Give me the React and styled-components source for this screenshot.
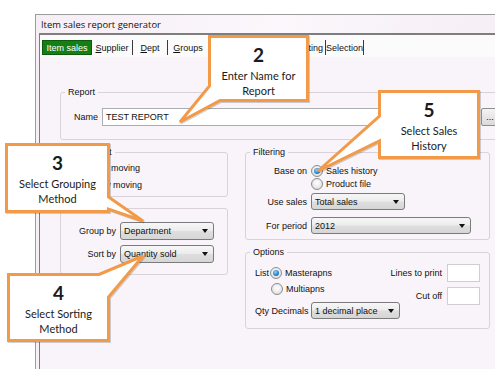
import React from "react";
import styled, { createGlobalStyle } from "styled-components";

const Global = createGlobalStyle`
  html, body { margin: 0; padding: 0; background: #ffffff; overflow: hidden; }
  body { font-family: "Liberation Sans", Arial, sans-serif; }
  * { box-sizing: border-box; }
`;

const Page = styled.div`
  position: relative;
  width: 495px;
  height: 369px;
  overflow: hidden;
  padding: 14px 0 0 35px;
  background: #ffffff;
`;

const Window = styled.div`
  width: 480px;
  height: 100%;
  border-top: 1px solid #9c9c9c;
  border-left: 1px solid #9c9c9c;
  background: linear-gradient(100deg, #f6eef5 0%, #fbf7fb 45%, #f4ecf3 100%);
  display: flex;
  flex-direction: column;
`;

const TitleBar = styled.div`
  height: 18px;
  padding-left: 5px;
  display: flex;
  align-items: center;
  font-family: "Open Sans", "Liberation Sans", sans-serif;
  font-size: 9.4px;
  color: #111;
`;

const Frame = styled.div`
  flex: 1;
  margin-left: 3px;
  border-top: 2px solid #7e7e7e;
  border-left: 1px solid #7e7e7e;
  background: #f9f4f9;
  display: flex;
  flex-direction: column;
`;

const TabBar = styled.div`
  height: 22px;
  padding: 5px 0 0 2px;
  display: flex;
  align-items: flex-start;
  background: #fcfbfc;
`;

const Tab = styled.div`
  width: ${(p) => p.$w}px;
  height: 15px;
  display: flex;
  align-items: center;
  justify-content: ${(p) => (p.$end ? "flex-end" : "center")};
  padding-right: ${(p) => (p.$end ? 2 : 0)}px;
  overflow: hidden;
  font-size: 9px;
  color: ${(p) => (p.$active ? "#ffffff" : "#111")};
  background: ${(p) => (p.$active ? "#157f15" : "transparent")};
  border: ${(p) => (p.$active ? "1px solid #0c5c0c" : "none")};
  border-right: ${(p) => (p.$active ? "1px solid #0c5c0c" : "1px solid #3a3a3a")};
  white-space: nowrap;
  u { text-decoration: underline; }
`;

const Content = styled.div`
  padding: 29px 0 0 20px;
`;

const Group = styled.fieldset`
  margin: 0;
  padding: 0;
  min-width: 0;
  width: ${(p) => (p.$w ? `${p.$w}px` : "auto")};
  height: ${(p) => p.$h}px;
  border: 1px solid #d9d3d9;
  border-radius: 3px;
`;

const Legend = styled.legend`
  margin-left: 4px;
  padding: 0 3px;
  font-size: 9px;
  line-height: 12px;
  color: #111;
`;

const ReportBody = styled.div`
  padding: 10px 0 0 13px;
  display: flex;
  align-items: center;
  gap: 4px;
`;

const Label = styled.span`
  font-size: 9px;
  color: #111;
  white-space: nowrap;
  text-align: ${(p) => (p.$right ? "right" : "left")};
`;

const TextInput = styled.div`
  width: ${(p) => p.$w}px;
  height: ${(p) => p.$h || 18}px;
  background: #ffffff;
  border: 1px solid ${(p) => (p.$light ? "#cfcfcf" : "#abadb3")};
  font-size: 9px;
  display: flex;
  align-items: center;
  padding-left: 3px;
  color: #111;
`;

const EllipsisButton = styled.div`
  width: 18px;
  height: 18px;
  margin-left: -3px;
  border: 1px solid #8d8d8d;
  border-radius: 2px;
  background: linear-gradient(#f4f4f4, #dadada);
  font-size: 9px;
  display: flex;
  align-items: center;
  justify-content: center;
`;

const Columns = styled.div`
  margin-top: 6px;
  display: grid;
  grid-template-columns: 168px 245px;
  column-gap: 17px;
`;

const Column = styled.div`
  display: flex;
  flex-direction: column;
  gap: ${(p) => p.$gap}px;
`;

const RadioStack = styled.div`
  padding: 3px 0 0 15px;
  display: flex;
  flex-direction: column;
  gap: 4px;
`;

const RadioRow = styled.div`
  height: ${(p) => p.$h || 13}px;
  display: flex;
  align-items: center;
  gap: ${(p) => (p.$gap != null ? p.$gap : 3)}px;
  padding-left: ${(p) => p.$indent || 0}px;
  font-size: 9px;
  color: #111;
  white-space: nowrap;
`;

const RadioDot = styled.span`
  width: 12px;
  height: 12px;
  flex: none;
  margin-right: ${(p) => p.$mr || 0}px;
  border-radius: 50%;
  border: 1px solid #8b8c8d;
  background: radial-gradient(circle at 50% 40%, #ffffff 0%, #eeeeee 45%, #d2d2d2 100%);
  display: flex;
  align-items: center;
  justify-content: center;
  &::after {
    content: "";
    width: 6px;
    height: 6px;
    border-radius: 50%;
    display: ${(p) => (p.$on ? "block" : "none")};
    background: radial-gradient(circle at 40% 35%, #8fd3fb 0%, #2a86cf 55%, #0f4f8c 100%);
  }
`;

const FormGrid = styled.div`
  padding: ${(p) => p.$pad || "8px 0 0 0"};
  display: grid;
  grid-template-columns: ${(p) => p.$label}px auto;
  column-gap: 4px;
  row-gap: ${(p) => p.$rowGap || 0}px;
  align-items: center;
  justify-items: start;
  & > ${Label} { justify-self: end; }
`;

const Combo = styled.div`
  width: ${(p) => p.$w}px;
  height: ${(p) => p.$h || 18}px;
  margin-top: ${(p) => p.$mt || 0}px;
  border: 1px solid #7b7b7b;
  border-radius: 3px;
  background: linear-gradient(#f7f7f7 0%, #ececec 48%, #dedede 52%, #d6d6d6 100%);
  display: flex;
  align-items: center;
  justify-content: space-between;
  padding: 0 5px 0 3px;
  font-size: 9px;
  color: #111;
  white-space: nowrap;
  &::after {
    content: "";
    width: 0;
    height: 0;
    border-left: 3.5px solid transparent;
    border-right: 3.5px solid transparent;
    border-top: 4px solid #111;
  }
`;

const Cell = styled.div`
  margin-top: ${(p) => p.$mt || 0}px;
`;

const OptionsBody = styled.div`
  padding: 6px 9px 0 9px;
`;

const OptionsTop = styled.div`
  display: flex;
  justify-content: space-between;
  align-items: flex-start;
`;

const ListCol = styled.div`
  display: flex;
  flex-direction: column;
`;

const SmallFields = styled.div`
  display: grid;
  grid-template-columns: auto 33px;
  column-gap: 5px;
  row-gap: 5px;
  align-items: center;
  justify-items: end;
`;

const QtyRow = styled.div`
  margin-top: -3px;
  display: grid;
  grid-template-columns: 52px auto;
  column-gap: 4px;
  align-items: center;
`;

/* ---------- callouts (overlay) ---------- */

const CalloutBox = styled.div`
  position: absolute;
  left: ${(p) => p.$x}px;
  top: ${(p) => p.$y}px;
  width: ${(p) => p.$w}px;
  height: ${(p) => p.$h}px;
  z-index: 5;
`;

const CalloutShape = styled.svg`
  position: absolute;
  left: 0;
  top: 0;
  overflow: visible;
  filter: drop-shadow(1px 1px 0.6px rgba(0, 0, 0, 0.18));
`;

const CalloutText = styled.div`
  position: relative;
  display: flex;
  flex-direction: column;
  align-items: center;
  padding-top: 9px;
  font-family: Lato, "Open Sans", sans-serif;
  color: #1b1b1b;
`;

const CalloutNum = styled.div`
  font-weight: 700;
  font-size: 19px;
  line-height: 22px;
`;

const CalloutLines = styled.div`
  margin-top: 3px;
  font-size: 11px;
  line-height: 14.5px;
  text-align: center;
  white-space: nowrap;
`;

function Callout({ x, y, w, h, d, num, lines }) {
  return (
    <CalloutBox $x={x} $y={y} $w={w} $h={h}>
      <CalloutShape width={w} height={h} viewBox={`0 0 ${w} ${h}`}>
        <path d={d} fill="#ffffff" stroke="#f29a48" strokeWidth="3" strokeLinejoin="miter" />
      </CalloutShape>
      <CalloutText>
        <CalloutNum>{num}</CalloutNum>
        <CalloutLines>
          {lines.map((l) => (
            <div key={l}>{l}</div>
          ))}
        </CalloutLines>
      </CalloutText>
    </CalloutBox>
  );
}

const Radio = ({ on, children, indent, h, gap }) => (
  <RadioRow $indent={indent} $h={h} $gap={gap}>
    <RadioDot $on={on} />
    {children}
  </RadioRow>
);

export default function App() {
  return (
    <>
      <Global />
      <Page>
        <Window>
          <TitleBar>Item sales report generator</TitleBar>
          <Frame>
            <TabBar>
              <Tab $w={50} $active>Item sales</Tab>
              <Tab $w={41}><span><u>S</u>upplier</span></Tab>
              <Tab $w={35}><span><u>D</u>ept</span></Tab>
              <Tab $w={41}><span><u>G</u>roups</span></Tab>
              <Tab $w={117} $end>Printing</Tab>
              <Tab $w={38}>Selection</Tab>
            </TabBar>
            <Content>
              <Group $w={440} $h={54}>
                <Legend>Report</Legend>
                <ReportBody>
                  <Label>Name</Label>
                  <TextInput $w={378}>TEST REPORT</TextInput>
                  <EllipsisButton>...</EllipsisButton>
                </ReportBody>
              </Group>
              <Columns>
                <Column $gap={5}>
                  <Group $h={51}>
                    <Legend>Item report</Legend>
                    <RadioStack>
                      <Radio on>Fast moving</Radio>
                      <Radio>Slow moving</Radio>
                    </RadioStack>
                  </Group>
                  <Group $h={73}>
                    <Legend>Grouping</Legend>
                    <FormGrid $label={55} $rowGap={5}>
                      <Label $right>Group by</Label>
                      <Combo $w={94}>Department</Combo>
                      <Label $right>Sort by</Label>
                      <Combo $w={94}>Quantity sold</Combo>
                    </FormGrid>
                  </Group>
                </Column>
                <Column $gap={6}>
                  <Group $h={94}>
                    <Legend>Filtering</Legend>
                    <FormGrid $label={52} $pad="6px 0 0 9px">
                      <Label $right>Base on</Label>
                      <Radio on>Sales history</Radio>
                      <span />
                      <Radio>Product file</Radio>
                      <Label $right>
                        <Cell $mt={3}>Use sales</Cell>
                      </Label>
                      <Combo $w={94} $h={17} $mt={3}>Total sales</Combo>
                      <Label $right>
                        <Cell $mt={7}>For period</Cell>
                      </Label>
                      <Combo $w={160} $h={17} $mt={7}>2012</Combo>
                    </FormGrid>
                  </Group>
                  <Group $h={83}>
                    <Legend>Options</Legend>
                    <OptionsBody>
                      <OptionsTop>
                        <ListCol>
                          <RadioRow $h={18} $gap={1}>
                            <span>List</span>
                            <RadioDot $on $mr={2} />
                            <span>Masterapns</span>
                          </RadioRow>
                          <Radio indent={16} h={14}>Multiapns</Radio>
                        </ListCol>
                        <SmallFields>
                          <Label>Lines to print</Label>
                          <TextInput $w={33} $light />
                          <Label>Cut off</Label>
                          <TextInput $w={33} $light />
                        </SmallFields>
                      </OptionsTop>
                      <QtyRow>
                        <Label>Qty Decimals</Label>
                        <Combo $w={89} $h={17}>1 decimal place</Combo>
                      </QtyRow>
                    </OptionsBody>
                  </Group>
                </Column>
              </Columns>
            </Content>
          </Frame>
        </Window>

        <Callout
          x={208}
          y={35}
          w={101}
          h={67}
          d="M1.5 1.5 H99.5 V65.5 H12 L-28 87 L1.5 51 Z"
          num="2"
          lines={["Enter Name for", "Report"]}
        />
        <Callout
          x={378}
          y={90}
          w={102}
          h={69}
          d="M1.5 1.5 H100.5 V67.5 H1.5 V51 L-60 81 L1.5 26 Z"
          num="5"
          lines={["Select Sales", "History"]}
        />
        <Callout
          x={5}
          y={143}
          w={105}
          h={70}
          d="M1.5 1.5 H103.5 V54 L138 78 L103.5 66 V68.5 H1.5 Z"
          num="3"
          lines={["Select Grouping", "Method"]}
        />
        <Callout
          x={7}
          y={273}
          w={103}
          h={69}
          d="M1.5 1.5 H92 L136 -17 L101.5 24 V67.5 H1.5 Z"
          num="4"
          lines={["Select Sorting", "Method"]}
        />
      </Page>
    </>
  );
}
